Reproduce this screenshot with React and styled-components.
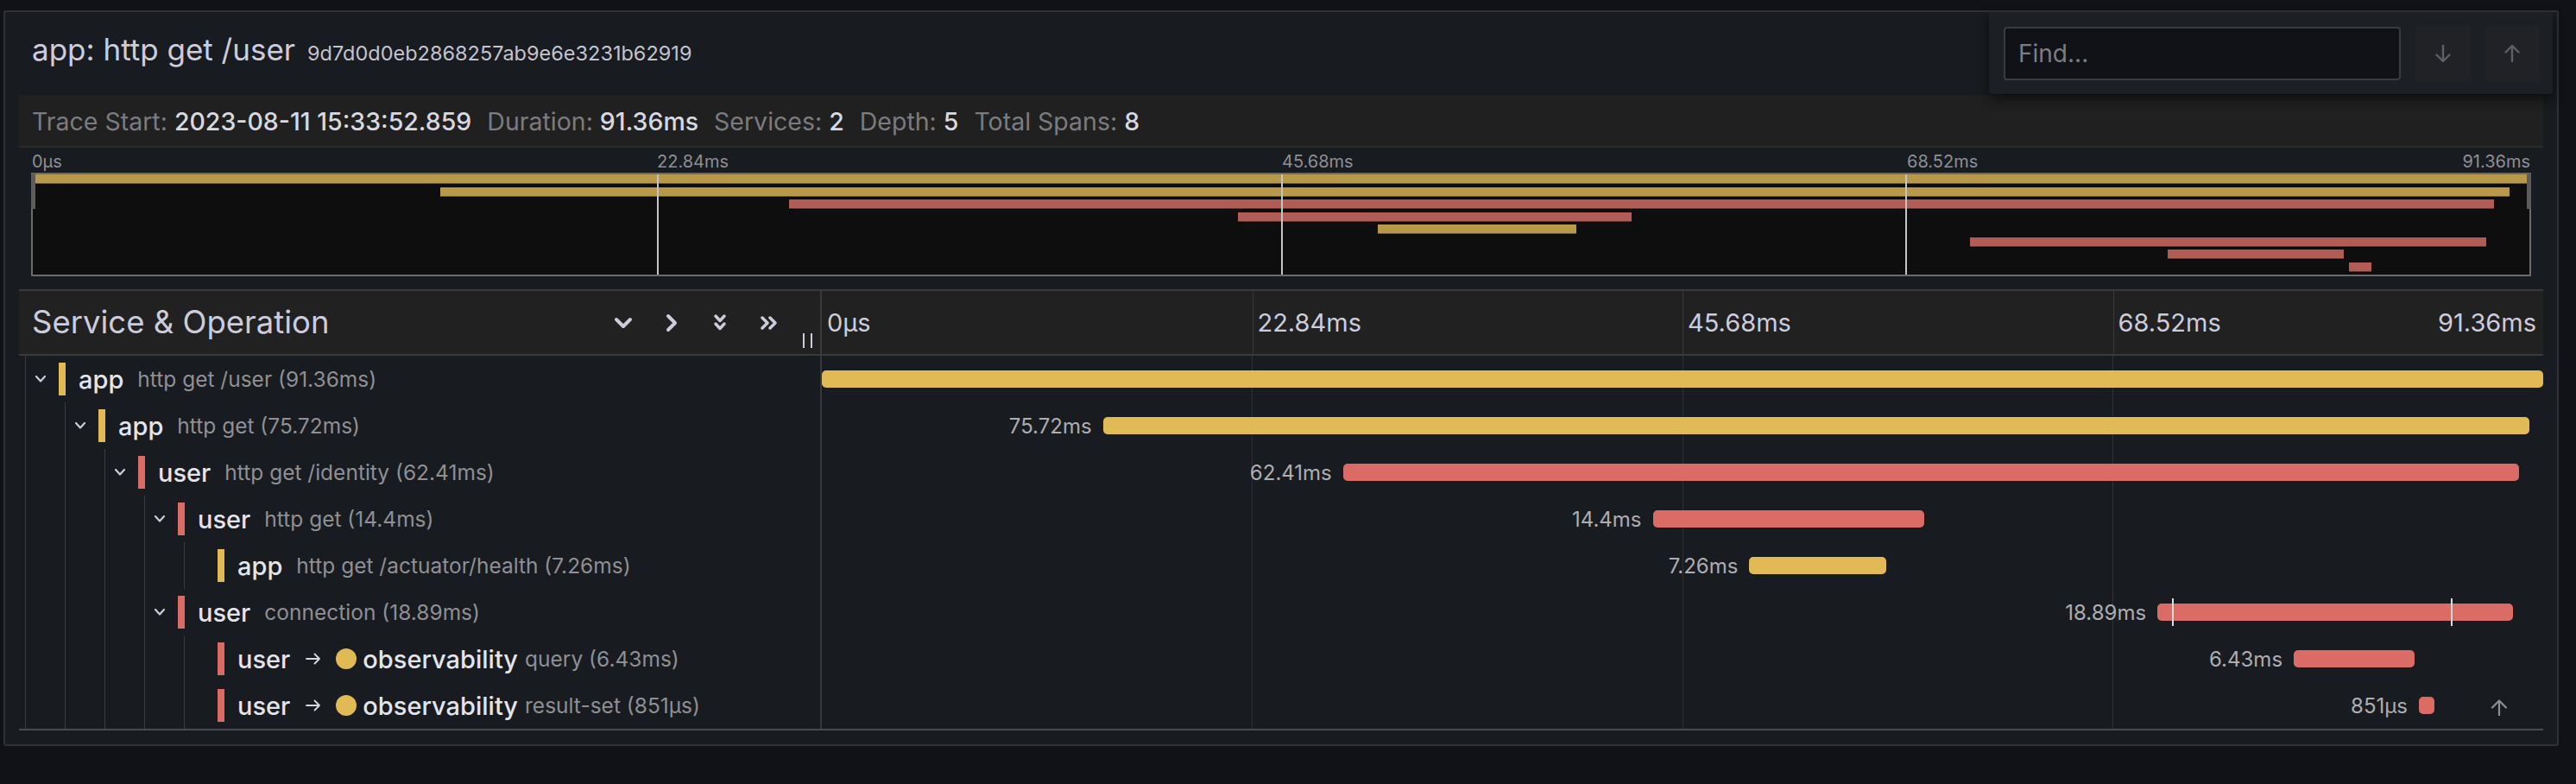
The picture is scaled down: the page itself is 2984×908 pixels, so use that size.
import React from "react";
import styled, { createGlobalStyle } from "styled-components";

const COLORS = { yellow: "#e1b955", red: "#da6c65" };
const MINI = { yellow: "#b8994a", red: "#b15c55" };

const spans = [
  { depth: 0, svc: "app", op: "http get /user", dur: "91.36ms", color: "yellow", kids: true, start: 0, width: 1 },
  { depth: 1, svc: "app", op: "http get", dur: "75.72ms", color: "yellow", kids: true, start: 0.1633, width: 0.8288, label: "75.72ms" },
  { depth: 2, svc: "user", op: "http get /identity", dur: "62.41ms", color: "red", kids: true, start: 0.3028, width: 0.6831, label: "62.41ms" },
  { depth: 3, svc: "user", op: "http get", dur: "14.4ms", color: "red", kids: true, start: 0.4827, width: 0.1576, label: "14.4ms" },
  { depth: 4, svc: "app", op: "http get /actuator/health", dur: "7.26ms", color: "yellow", start: 0.5388, width: 0.0795, label: "7.26ms" },
  { depth: 3, svc: "user", op: "connection", dur: "18.89ms", color: "red", kids: true, start: 0.7759, width: 0.2068, label: "18.89ms", ticks: [0.041, 0.825] },
  { depth: 4, svc: "user", peer: "observability", op: "query", dur: "6.43ms", color: "red", start: 0.8551, width: 0.0704, label: "6.43ms" },
  { depth: 4, svc: "user", peer: "observability", op: "result-set", dur: "851µs", color: "red", start: 0.9278, width: 0.009, label: "851µs", upArrow: true },
];

const ticks = ["0µs", "22.84ms", "45.68ms", "68.52ms", "91.36ms"];

const GlobalStyle = createGlobalStyle`
  html, body { margin: 0; padding: 0; background: #111217; }
  body {
    font-family: Inter, "Noto Sans", "DejaVu Sans", sans-serif;
    color: #ccccdc;
    -webkit-font-smoothing: antialiased;
  }
  * { box-sizing: border-box; }
`;

const Page = styled.div`
  width: 2984px;
  min-height: 908px;
  padding: 12px 20px 0 4px;
`;

const Panel = styled.section`
  background: #181b1f;
  border: 2px solid #2e3136;
  border-radius: 3px;
  padding: 0 16px 16px;
`;

const TitleRow = styled.header`
  display: flex;
  justify-content: space-between;
  align-items: flex-start;
  height: 96px;
`;

const Title = styled.h1`
  margin: 26px 0 0;
  padding-left: 15px;
  display: flex;
  align-items: baseline;
  gap: 14px;
  line-height: 1;
  font-weight: 400;
`;

const TitleText = styled.span`
  font-size: 35px;
  color: #ccccdc;
`;

const TraceId = styled.span`
  font-size: 23.5px;
  color: #c4c4d0;
`;

const FindBox = styled.div`
  width: 653px;
  height: 95px;
  margin-right: -11px;
  background: #1c1f24;
  border-radius: 0 0 4px 4px;
  box-shadow: 0 6px 14px rgba(0, 0, 0, 0.55);
  display: flex;
  align-items: center;
  padding: 0 15px 0 17px;
  gap: 16px;
  position: relative;
  z-index: 2;
`;

const FindInput = styled.input`
  width: 460px;
  height: 62px;
  margin-right: 1px;
  background: #111217;
  border: 2px solid #3a3c42;
  border-radius: 4px;
  padding: 0 0 0 15px;
  font-family: inherit;
  font-size: 28px;
  color: #ccccdc;
  outline: none;
  &::placeholder { color: #7c7d83; }
`;

const NavButton = styled.button`
  width: 64px;
  height: 64px;
  border: none;
  border-radius: 4px;
  background: #202226;
  display: flex;
  align-items: center;
  justify-content: center;
  padding: 0;
`;

const MetaBar = styled.div`
  height: 61px;
  background: #202020;
  border-bottom: 2px solid #2b2b2b;
  display: flex;
  align-items: center;
  gap: 18px;
  padding: 4px 15px 0;
  font-size: 28.5px;
  line-height: 1;
`;

const MetaItem = styled.span`
  display: flex;
  gap: 8px;
`;

const MetaLabel = styled.span`
  color: #7b7b80;
`;

const MetaValue = styled.span`
  color: #d8d9e0;
  font-weight: 500;
`;

const Minimap = styled.div`
  padding: 0 14px;
`;

const MiniLabels = styled.div`
  display: grid;
  grid-template-columns: repeat(4, 1fr);
  height: 29px;
  padding-top: 6px;
  font-size: 20px;
  line-height: 1;
  color: #8e8f94;
`;

const MiniLabelCell = styled.div`
  display: flex;
  justify-content: space-between;
  padding: 0 1px;
`;

const MiniCanvas = styled.div`
  position: relative;
  height: 120px;
  border: 2px solid #6b6b6b;
  background: #0e0e0e;
  display: flex;
  flex-direction: column;
`;

const MiniRow = styled.div`
  flex: 1;
  display: flex;
`;

const MiniBar = styled.div`
  height: 11px;
  flex: none;
  background: ${(p) => MINI[p.$color]};
  box-shadow: inset 0 -1px 0 rgba(0, 0, 0, 0.45), 0 1px 0 rgba(0, 0, 0, 0.5);
`;

const MiniTick = styled.div`
  position: absolute;
  top: 0;
  bottom: 0;
  left: ${(p) => p.$at}%;
  width: 1.5px;
  background: #c4c4c4;
`;

const MiniHandle = styled.div`
  position: absolute;
  top: -1px;
  ${(p) => (p.$side === "left" ? "left: -2px;" : "right: -2px;")}
  width: 5px;
  height: 41px;
  background: #5c5c5c;
`;

const Table = styled.div`
  margin-top: 15px;
  border-bottom: 2px solid #4a4b4f;
`;

const HeaderRow = styled.div`
  display: flex;
  height: 77px;
  background: #212121;
  border-top: 2px solid #3a3a3a;
  border-bottom: 2px solid #3a3a3a;
`;

const HeaderLeft = styled.div`
  width: 928px;
  flex: none;
  display: flex;
  align-items: center;
  padding: 0 9px 0 15px;
`;

const HeaderTitle = styled.div`
  flex: 1;
  font-size: 36.5px;
  line-height: 1;
  color: #ccccdc;
`;

const IconGroup = styled.div`
  display: flex;
`;

const IconSlot = styled.span`
  width: 56px;
  height: 40px;
  display: flex;
  align-items: center;
  justify-content: center;
`;

const ResizeHandle = styled.span`
  width: 11px;
  height: 17px;
  margin: 0 0 7px 12px;
  align-self: flex-end;
  border-left: 2px solid #ccccdc;
  border-right: 2px solid #ccccdc;
`;

const TimeHeader = styled.div`
  flex: 1;
  display: grid;
  grid-template-columns: repeat(4, 1fr);
  border-left: 2px solid #3a3a3a;
  font-size: 29px;
  line-height: 1;
  color: #ccccdc;
`;

const TickCell = styled.div`
  display: flex;
  align-items: center;
  justify-content: space-between;
  padding: 0 8px 0 ${(p) => (p.$first ? 6 : 5)}px;
  border-left: ${(p) => (p.$first ? "none" : "1px solid #3a3a3a")};
`;

const Row = styled.div`
  display: flex;
  height: 54px;
`;

const TreeCell = styled.div`
  width: 928px;
  flex: none;
  display: flex;
  align-items: center;
  padding-left: 7px;
  white-space: nowrap;
  overflow: hidden;
`;

const Guide = styled.span`
  width: ${(p) => (p.$toggle ? 39 : 46)}px;
  flex: none;
  align-self: stretch;
  border-left: 1px solid #3c3d42;
  display: flex;
  align-items: center;
  padding-left: 10px;
`;

const ColorBar = styled.span`
  width: 8px;
  height: 38px;
  flex: none;
  background: ${(p) => COLORS[p.$color]};
`;

const SvcName = styled.span`
  margin-left: ${(p) => p.$gap}px;
  font-size: 29px;
  font-weight: 500;
  color: #e4e4ec;
`;

const OpName = styled.span`
  margin-left: ${(p) => (p.$tight ? 8 : 16)}px;
  font-size: 24.5px;
  color: #8f8f94;
`;

const PeerArrow = styled.svg`
  margin-left: 18px;
  flex: none;
`;

const PeerDot = styled.span`
  width: 24px;
  height: 24px;
  margin-left: 17px;
  border-radius: 50%;
  background: ${COLORS.yellow};
  flex: none;
`;

const TimeCell = styled.div`
  flex: 1;
  min-width: 0;
  display: flex;
  align-items: center;
  border-left: 2px solid #36373b;
  background-image: linear-gradient(#2f3035, #2f3035), linear-gradient(#2f3035, #2f3035),
    linear-gradient(#2f3035, #2f3035);
  background-size: 1px 100%;
  background-repeat: no-repeat;
  background-position: 25% 0, 50% 0, 75% 0;
`;

const BarLead = styled.div`
  flex: none;
  display: flex;
  justify-content: flex-end;
`;

const BarLabel = styled.span`
  padding-right: 13px;
  font-size: 24px;
  color: #adadb2;
  white-space: nowrap;
`;

const Bar = styled.div`
  position: relative;
  flex: none;
  height: 20px;
  min-width: 18px;
  border-radius: 5px;
  background: ${(p) => COLORS[p.$color]};
`;

const LogTick = styled.span`
  position: absolute;
  top: -6px;
  bottom: -6px;
  left: ${(p) => p.$at}%;
  width: 2px;
  background: #dcdcdc;
`;

const UpButton = styled.span`
  margin: 4px 40px 0 auto;
  display: flex;
`;

const Chevron = ({ dir, stroke = "#ccccdc", w = 4 }) => {
  const paths = {
    down: "M4 5 L12 13 L20 5",
    right: "M4 3 L12 11 L4 19",
    ddown: "M3 3 L8 8.5 L13 3 M3 12 L8 17.5 L13 12",
    dright: "M3 2 L9 8 L3 14 M12 2 L18 8 L12 14",
  };
  const boxes = { down: "0 0 24 18", right: "0 0 16 22", ddown: "0 0 16 21", dright: "0 0 21 16" };
  const [, , vw, vh] = boxes[dir].split(" ").map(Number);
  return (
    <svg width={vw} height={vh} viewBox={boxes[dir]} fill="none">
      <path d={paths[dir]} stroke={stroke} strokeWidth={w} strokeLinecap="round" strokeLinejoin="round" />
    </svg>
  );
};

const SmallChevron = () => (
  <svg width="14" height="10" viewBox="0 0 14 10" fill="none">
    <path d="M2 2 L7 7.5 L12 2" stroke="#ccccdc" strokeWidth="2.2" strokeLinecap="round" strokeLinejoin="round" />
  </svg>
);

const Arrow = ({ up, color }) => (
  <svg width="24" height="24" viewBox="0 0 24 24" fill="none">
    <path
      d={up ? "M12 21 V3.5 M4.5 10.5 L12 3 L19.5 10.5" : "M12 3 V20.5 M4.5 13.5 L12 21 L19.5 13.5"}
      stroke={color}
      strokeWidth="2.4"
      strokeLinecap="round"
      strokeLinejoin="round"
    />
  </svg>
);

function SpanRow({ s }) {
  const guides = [];
  for (let i = 0; i < s.depth; i++) guides.push(<Guide key={i} />);
  return (
    <Row>
      <TreeCell>
        {guides}
        <Guide $toggle>{s.kids && <SmallChevron />}</Guide>
        <ColorBar $color={s.color} />
        <SvcName $gap={15}>{s.svc}</SvcName>
        {s.peer && (
          <>
            <PeerArrow width="18" height="14" viewBox="0 0 18 14" fill="none">
              <path d="M1 7 H16 M10.5 1.5 L16 7 L10.5 12.5" stroke="#d8d8e0" strokeWidth="1.8" strokeLinecap="round" strokeLinejoin="round" />
            </PeerArrow>
            <PeerDot />
            <SvcName $gap={7}>{s.peer}</SvcName>
          </>
        )}
        <OpName $tight={!!s.peer}>
          {s.op} ({s.dur})
        </OpName>
      </TreeCell>
      <TimeCell>
        <BarLead style={{ width: `${s.start * 100}%` }}>{s.label && <BarLabel>{s.label}</BarLabel>}</BarLead>
        <Bar $color={s.color} style={{ width: `${s.width * 100}%` }}>
          {s.ticks && s.ticks.map((t) => <LogTick key={t} $at={t * 100} />)}
        </Bar>
        {s.upArrow && (
          <UpButton>
            <svg width="22" height="19" viewBox="0 0 22 19" fill="none">
              <path d="M11 18 V2 M3 9.5 L11 1.5 L19 9.5" stroke="#8e8e94" strokeWidth="2.2" strokeLinecap="round" strokeLinejoin="round" />
            </svg>
          </UpButton>
        )}
      </TimeCell>
    </Row>
  );
}

export default function App() {
  return (
    <>
      <GlobalStyle />
      <Page>
        <Panel>
          <TitleRow>
            <Title>
              <TitleText>app: http get /user</TitleText>
              <TraceId>9d7d0d0eb2868257ab9e6e3231b62919</TraceId>
            </Title>
            <FindBox>
              <FindInput placeholder="Find..." />
              <NavButton aria-label="Next">
                <Arrow color="#5e6067" />
              </NavButton>
              <NavButton aria-label="Previous">
                <Arrow up color="#5e6067" />
              </NavButton>
            </FindBox>
          </TitleRow>

          <MetaBar>
            <MetaItem>
              <MetaLabel>Trace Start:</MetaLabel>
              <MetaValue>2023-08-11 15:33:52.859</MetaValue>
            </MetaItem>
            <MetaItem>
              <MetaLabel>Duration:</MetaLabel>
              <MetaValue>91.36ms</MetaValue>
            </MetaItem>
            <MetaItem>
              <MetaLabel>Services:</MetaLabel>
              <MetaValue>2</MetaValue>
            </MetaItem>
            <MetaItem>
              <MetaLabel>Depth:</MetaLabel>
              <MetaValue>5</MetaValue>
            </MetaItem>
            <MetaItem>
              <MetaLabel>Total Spans:</MetaLabel>
              <MetaValue>8</MetaValue>
            </MetaItem>
          </MetaBar>

          <Minimap>
            <MiniLabels>
              <MiniLabelCell>{ticks[0]}</MiniLabelCell>
              <MiniLabelCell>{ticks[1]}</MiniLabelCell>
              <MiniLabelCell>{ticks[2]}</MiniLabelCell>
              <MiniLabelCell>
                <span>{ticks[3]}</span>
                <span>{ticks[4]}</span>
              </MiniLabelCell>
            </MiniLabels>
            <MiniCanvas>
              {spans.map((s, i) => (
                <MiniRow key={i}>
                  <MiniBar
                    $color={s.color}
                    style={{ marginLeft: `${s.start * 100}%`, width: `max(${s.width * 100}%, 6px)` }}
                  />
                </MiniRow>
              ))}
              <MiniTick $at={25} />
              <MiniTick $at={50} />
              <MiniTick $at={75} />
              <MiniHandle $side="left" />
              <MiniHandle $side="right" />
            </MiniCanvas>
          </Minimap>

          <Table>
            <HeaderRow>
              <HeaderLeft>
                <HeaderTitle>Service &amp; Operation</HeaderTitle>
                <IconGroup>
                  <IconSlot>
                    <Chevron dir="down" />
                  </IconSlot>
                  <IconSlot>
                    <Chevron dir="right" />
                  </IconSlot>
                  <IconSlot>
                    <Chevron dir="ddown" w={3.5} />
                  </IconSlot>
                  <IconSlot>
                    <Chevron dir="dright" w={3.5} />
                  </IconSlot>
                </IconGroup>
                <ResizeHandle />
              </HeaderLeft>
              <TimeHeader>
                <TickCell $first>{ticks[0]}</TickCell>
                <TickCell>{ticks[1]}</TickCell>
                <TickCell>{ticks[2]}</TickCell>
                <TickCell>
                  <span>{ticks[3]}</span>
                  <span>{ticks[4]}</span>
                </TickCell>
              </TimeHeader>
            </HeaderRow>
            {spans.map((s, i) => (
              <SpanRow key={i} s={s} />
            ))}
          </Table>
        </Panel>
      </Page>
    </>
  );
}
